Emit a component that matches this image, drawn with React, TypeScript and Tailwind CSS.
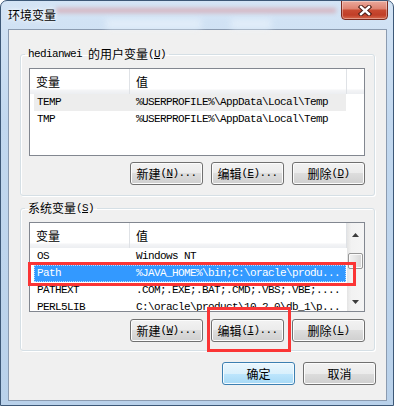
import React from 'react';

type Row = { name: string; value: string; sel?: 'active' | 'inactive' };

const mono = "font-['Liberation_Mono',monospace] text-[11px] tracking-[-0.6px]";
const cjk = "font-['Noto_Sans_CJK_SC',sans-serif] text-[12px] tracking-normal";

const userVars: Row[] = [
  { name: 'TEMP', value: '%USERPROFILE%\\AppData\\Local\\Temp', sel: 'inactive' },
  { name: 'TMP', value: '%USERPROFILE%\\AppData\\Local\\Temp' },
];

const sysVars: Row[] = [
  { name: 'OS', value: 'Windows NT' },
  { name: 'Path', value: '%JAVA_HOME%\\bin;C:\\oracle\\produ...', sel: 'active' },
  { name: 'PATHEXT', value: '.COM;.EXE;.BAT;.CMD;.VBS;.VBE;....' },
  { name: 'PERL5LIB', value: 'C:\\oracle\\product\\10.2.0\\db_1\\p...' },
];

const headerBg = 'bg-[linear-gradient(#ffffff_0%,#ffffff_78%,#f3f4f6_86%,#eceef1_100%)]';

function Key({ k }: { k: string }) {
  return (
    <span className={mono}>
      (<span className="underline underline-offset-[1px]">{k}</span>)
    </span>
  );
}

function Btn({ label, k, dots = true, primary = false }: { label: string; k?: string; dots?: boolean; primary?: boolean }) {
  return (
    <button
      className={`flex h-[23px] w-[73px] items-center justify-center rounded-[3px] border leading-none text-black ${
        primary
          ? 'border-[#3c7fb1] bg-[linear-gradient(#eaf6fd_0%,#d9f0fc_50%,#bee6fd_50%,#a7d9f5_100%)] shadow-[inset_0_0_0_1px_#f4fbff]'
          : 'border-[#707070] bg-[linear-gradient(#f2f2f2_0%,#ebebeb_50%,#dddddd_50%,#cfcfcf_100%)] shadow-[inset_0_0_0_1px_#fcfcfc]'
      }`}
    >
      <span className={cjk}>{label}</span>
      {k && <Key k={k} />}
      {k && dots && <span className={mono}>...</span>}
    </button>
  );
}

function Header() {
  return (
    <div className={`flex h-[25px] shrink-0 ${headerBg}`}>
      <div className={`flex w-[100px] items-center border-r border-[#dfe2e6] pl-[6px] leading-none ${cjk}`}>变量</div>
      <div className={`flex w-[217px] items-center border-r border-[#dfe2e6] pl-[6px] leading-none ${cjk}`}>值</div>
    </div>
  );
}

function VarRow({ row }: { row: Row }) {
  const sel =
    row.sel === 'active'
      ? 'bg-[#3399ff] text-white outline-1 outline-dotted outline-[#b5dbff] -outline-offset-1'
      : row.sel === 'inactive'
      ? 'bg-[#ededed]'
      : '';
  return (
    <div className={`ml-[4px] flex h-[17px] w-[312px] shrink-0 items-center leading-none ${mono} ${sel}`}>
      <span className="w-[102px] pl-[3px]">{row.name}</span>
      <span className="whitespace-pre">{row.value}</span>
    </div>
  );
}

function ScrollBar() {
  return (
    <div className="flex w-[17px] flex-col bg-[linear-gradient(90deg,#e4e4e4_0%,#f2f2f2_25%,#f5f5f5_100%)]">
      <div className="flex h-[17px] shrink-0 items-end justify-center pb-[3px]">
        <svg width="7" height="4" viewBox="0 0 7 4">
          <path d="M0 4 L3.5 0 L7 4 Z" fill="#3c3c3c" />
        </svg>
      </div>
      <div className="flex-1">
        <div className="mx-[1px] mt-[13px] h-[16px] rounded-[2px] border border-[#979797] bg-[linear-gradient(90deg,#f3f3f3_0%,#e6e6e6_50%,#d6d6d6_100%)] shadow-[inset_0_0_0_1px_#fbfbfb]" />
      </div>
      <div className="flex h-[17px] shrink-0 items-start justify-center pt-[6px]">
        <svg width="7" height="4" viewBox="0 0 7 4">
          <path d="M0 0 L7 0 L3.5 4 Z" fill="#3c3c3c" />
        </svg>
      </div>
    </div>
  );
}

function VarList({ rows, scroll, h }: { rows: Row[]; scroll?: boolean; h: string }) {
  return (
    <div className={`flex ${h} shrink-0 overflow-hidden border border-[#828790] bg-white`}>
      <div className="flex w-[317px] flex-col overflow-hidden">
        <Header />
        {rows.map((r) => (
          <VarRow key={r.name} row={r} />
        ))}
      </div>
      {scroll ? <ScrollBar /> : <div className={`h-[25px] flex-1 ${headerBg}`} />}
    </div>
  );
}

export default function App() {
  return (
    <div className="relative h-[406px] w-[394px] overflow-hidden rounded-t-[7px] border border-[#3d5877] bg-[linear-gradient(180deg,#d4e4f5_0%,#c2d8ef_30%,#b9d1ea_100%)] text-black">
      {/* title bar */}
      <div className="relative flex h-[28px] items-center justify-between pl-[7px]">
        <div className="absolute left-[55px] top-[7px] h-[5px] w-[280px] bg-[#d8959c] opacity-60 blur-[2px]" />
        <div className="absolute left-[105px] top-[18px] h-[10px] w-[95px] bg-[#e9f3fc] opacity-70 blur-[3px]" />
        <div className="absolute left-[230px] top-[18px] h-[10px] w-[40px] bg-[#e9f3fc] opacity-70 blur-[3px]" />
        <span className={`relative leading-none ${cjk} [text-shadow:0_0_6px_#fff,0_0_3px_#fff]`}>环境变量</span>
        <div className="relative mr-[5px] -mt-[1px] flex h-[20px] w-[47px] items-center justify-center self-start rounded-b-[4px] border border-[#7a2a1e] bg-[linear-gradient(#eaa99c_0%,#de8472_42%,#c84a31_52%,#c03e27_78%,#d76a4d_100%)] shadow-[inset_0_0_0_1px_rgba(255,255,255,0.35)]">
          <svg width="14" height="11" viewBox="0 0 14 11">
            <path d="M3 2 L11 9 M11 2 L3 9" stroke="#4b1c14" strokeWidth="4.4" strokeLinecap="square" />
            <path d="M3 2 L11 9 M11 2 L3 9" stroke="#ffffff" strokeWidth="2.4" strokeLinecap="square" />
          </svg>
        </div>
      </div>

      {/* client area */}
      <div className="ml-[7px] flex h-[372px] w-[379px] flex-col border border-[#8b9bb0] bg-[#f0f0f0]">
        <fieldset className="ml-[11px] mt-[17px] w-[355px] rounded-[3px] border border-[#d5dfe5] pb-[10px] pl-[8px] pr-[9px] pt-[7px] shadow-[inset_1px_1px_0_#fff,1px_1px_0_#fff]">
          <legend className="ml-[-4px] flex h-[14px] items-center px-[3px] leading-none">
            <span className={mono}>hedianwei&nbsp;</span>
            <span className={cjk}>的用户变量</span>
            <Key k="U" />
          </legend>
          <VarList rows={userVars} h="h-[88px]" />
          <div className="mt-[6px] flex justify-end gap-[8px]">
            <Btn label="新建" k="N" />
            <Btn label="编辑" k="E" />
            <Btn label="删除" k="D" dots={false} />
          </div>
        </fieldset>

        <fieldset className="ml-[11px] mt-[5px] w-[355px] rounded-[3px] border border-[#d5dfe5] pb-[8px] pl-[8px] pr-[9px] pt-[7px] shadow-[inset_1px_1px_0_#fff,1px_1px_0_#fff]">
          <legend className="ml-[-4px] flex h-[14px] items-center px-[3px] leading-none">
            <span className={cjk}>系统变量</span>
            <Key k="S" />
          </legend>
          <VarList rows={sysVars} scroll h="h-[90px]" />
          <div className="mt-[7px] flex justify-end gap-[8px]">
            <Btn label="新建" k="W" />
            <Btn label="编辑" k="I" />
            <Btn label="删除" k="L" dots={false} />
          </div>
        </fieldset>

        <div className="mr-[10px] mt-[11px] flex justify-end gap-[8px]">
          <Btn label="确定" primary />
          <Btn label="取消" />
        </div>
      </div>

      {/* red annotation boxes */}
      <div className="absolute left-[27px] top-[261px] h-[24px] w-[328px] border-[3px] border-[#fb3535]" />
      <div className="absolute left-[206px] top-[306px] h-[45px] w-[84px] border-[3px] border-[#fb3535]" />
    </div>
  );
}
